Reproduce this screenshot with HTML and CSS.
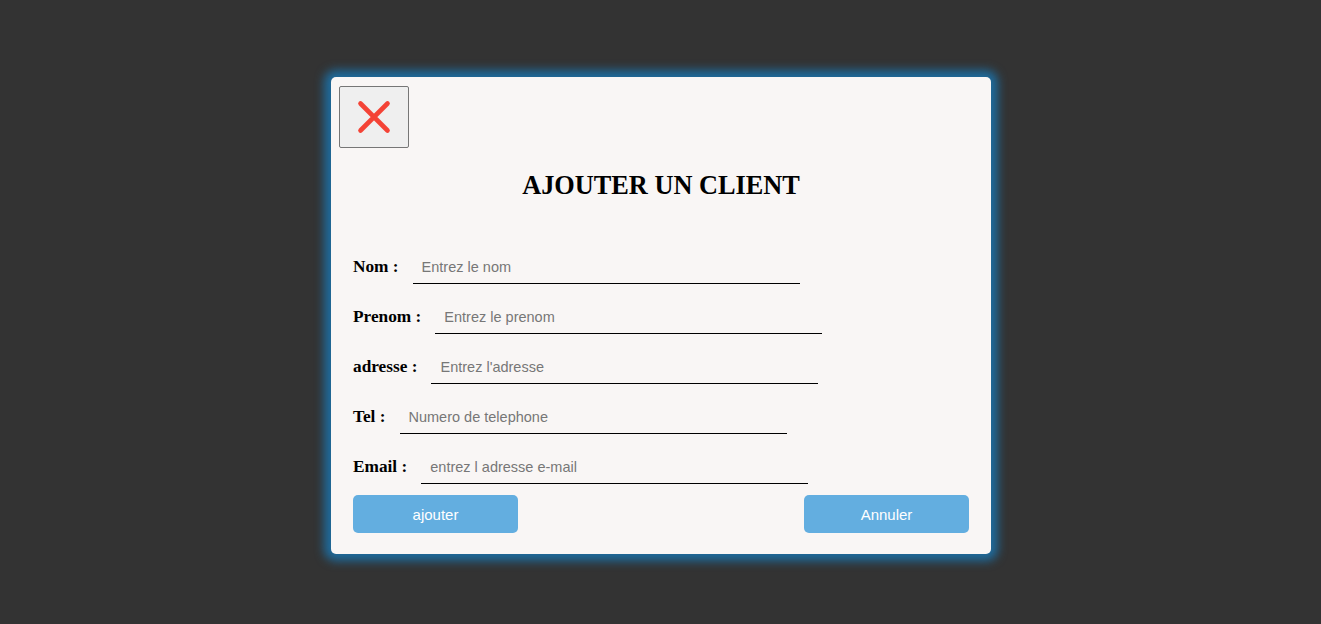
FILE: index.html
```html
<!DOCTYPE html>
<html lang="fr">
<head>
<meta charset="utf-8">
<title>Ajouter un client</title>
<link rel="stylesheet" href="styles.css">
</head>
<body>
<div class="modal">
  <button class="close-btn" type="button" aria-label="Fermer">
    <svg width="34" height="34" viewBox="0 0 34 34" aria-hidden="true">
      <path d="M3.5 3.5 L30.5 30.5 M30.5 3.5 L3.5 30.5" stroke="#f44336" stroke-width="4.6" stroke-linecap="round" fill="none"/>
    </svg>
  </button>
  <h2 class="title">AJOUTER UN CLIENT</h2>
  <form class="form">
    <div class="row"><label class="label">Nom :</label><input class="field" type="text" placeholder="Entrez le nom"></div>
    <div class="row"><label class="label">Prenom :</label><input class="field" type="text" placeholder="Entrez le prenom"></div>
    <div class="row"><label class="label">adresse :</label><input class="field" type="text" placeholder="Entrez l'adresse"></div>
    <div class="row"><label class="label">Tel :</label><input class="field" type="text" placeholder="Numero de telephone"></div>
    <div class="row"><label class="label">Email :</label><input class="field" type="text" placeholder="entrez l adresse e-mail"></div>
    <div class="actions">
      <button class="btn" type="button">ajouter</button>
      <button class="btn" type="button">Annuler</button>
    </div>
  </form>
</div>
</body>
</html>
```

FILE: styles.css
```css
html, body {
  margin: 0;
  padding: 0;
}
body {
  background: #333333;
  height: 624px;
  overflow: hidden;
  font-family: "Liberation Serif", "Times New Roman", serif;
}
.modal {
  box-sizing: border-box;
  width: 660px;
  height: 477px;
  margin: 77px 0 0 331px;
  background: #f9f6f5;
  border-radius: 5px;
  box-shadow: 0 0 10px 7px #1f6b9c;
  padding: 9px 22px 20px 8px;
  display: flex;
  flex-direction: column;
}
.close-btn {
  box-sizing: border-box;
  width: 70px;
  height: 62px;
  background: #efefef;
  border: 1px solid #767676;
  border-radius: 2px;
  padding: 0;
  display: flex;
  align-items: center;
  justify-content: center;
  margin: 0;
}
.title {
  margin: 23px 0 0 14px;
  font-size: 26.3px;
  line-height: 30px;
  font-weight: bold;
  text-align: center;
  color: #000;
}
.form {
  margin: 49px 0 0 14px;
  display: flex;
  flex-direction: column;
  gap: 16px;
}
.row {
  display: flex;
  align-items: center;
  gap: 14px;
  height: 34px;
}
.label {
  font-size: 17.3px;
  font-weight: bold;
  color: #000;
}
.field {
  box-sizing: border-box;
  width: 387px;
  height: 34px;
  border: none;
  border-bottom: 1px solid #000;
  background: transparent;
  padding: 0 9px;
  font-family: "Liberation Sans", Arial, sans-serif;
  font-size: 14.5px;
  color: #000;
  outline: none;
}
.field::placeholder {
  color: #777;
}
.actions {
  display: flex;
  justify-content: space-between;
  margin-top: -5px;
}
.btn {
  width: 165px;
  height: 38px;
  border: none;
  border-radius: 5px;
  background: #63aee0;
  color: #fff;
  font-family: "Liberation Sans", Arial, sans-serif;
  font-size: 15px;
  padding: 0;
}
```
